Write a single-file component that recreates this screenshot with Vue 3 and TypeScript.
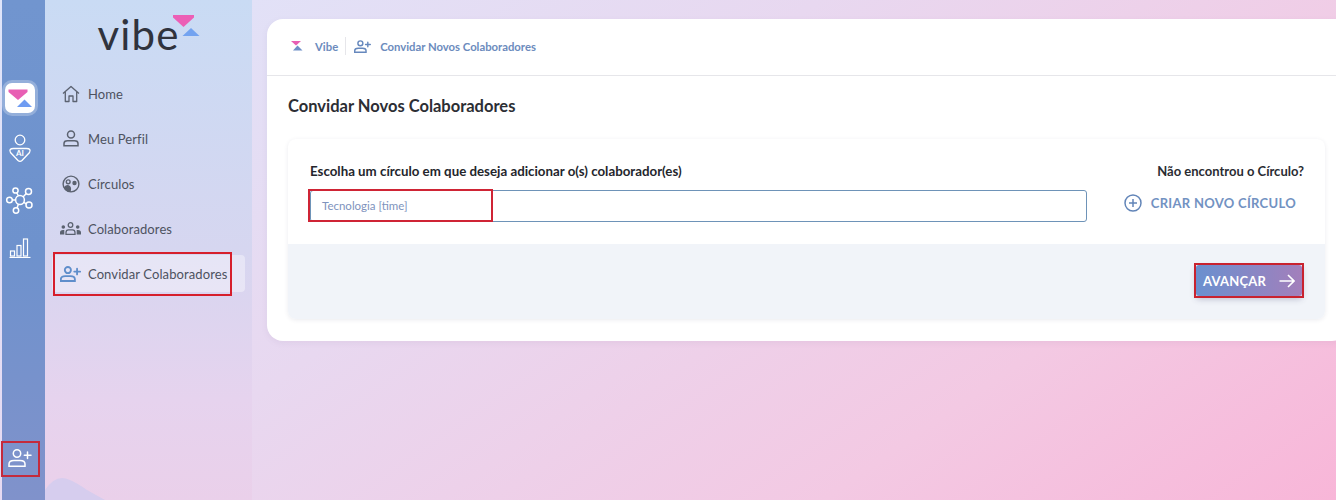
<script setup lang="ts">
const navItems = [
  { label: 'Home', icon: 'home' },
  { label: 'Meu Perfil', icon: 'user' },
  { label: 'Círculos', icon: 'face' },
  { label: 'Colaboradores', icon: 'group' },
  { label: 'Convidar Colaboradores', icon: 'invite' },
]
</script>

<template>
  <div class="page">
    <aside class="rail">
      <div class="tile">
        <svg width="30" height="30" viewBox="0 0 30 30"><path d="M3.500 6.500H22.500V9L13 17 3.500 9Z" fill="#e85fb4" /><path d="M19.500 16.500 27 24H12Z" fill="#6f9cf2" /></svg>
      </div>
      <svg class="rail-icon ai" width="24" height="30" viewBox="0 0 24 30" fill="none" stroke="#fff" stroke-width="1.300">
        <circle cx="12" cy="6" r="4.800" />
        <path d="M5.500 14.500H18.500Q23.500 14.500 21.500 18.500L14 26.500Q12 28.300 10 26.500L2.500 18.500Q.5 14.500 5.500 14.500Z" />
        <text x="12" y="21.500" text-anchor="middle" class="ai-text">AI</text>
      </svg>
      <svg class="rail-icon net" width="28" height="28" viewBox="0 0 28 28" fill="none" stroke="#fff" stroke-width="1.500">
        <circle cx="14" cy="14" r="4.400" />
        <circle cx="9.500" cy="4.500" r="2.600" />
        <circle cx="22.500" cy="5.500" r="3" />
        <circle cx="3.500" cy="14" r="2.800" />
        <circle cx="23" cy="19" r="3" />
        <circle cx="10" cy="24.500" r="2.700" />
        <path d="M10.800 7 12.500 10M20.300 7.600 17 11M6.300 14H9.600M20.300 17.800 17.800 16.300M11 21.900 12.400 18.200" />
      </svg>
      <svg class="rail-icon bars" width="22" height="20" viewBox="0 0 22 20" fill="none" stroke="#fff" stroke-width="1.200">
        <path d="M.5 19.500H21.500" />
        <rect x="1.500" y="13" width="4" height="5" />
        <rect x="8" y="7.500" width="4" height="10.500" />
        <rect x="14.500" y="1" width="4" height="17" />
      </svg>
      <svg class="rail-bottom" width="24" height="18" viewBox="0 0 24 18" fill="none" stroke="#fff" stroke-width="1.500" stroke-linecap="round">
        <circle cx="9" cy="4.500" r="3.700" />
        <path d="M1 17.200V15Q1 11.500 6 11.500H12Q17 11.500 17 15V17.200Z" />
        <path d="M19.500 3V9.500M16.300 6.200H23" />
      </svg>
    </aside>

    <nav class="side">
      <svg class="blob" width="60" height="24" viewBox="0 0 60 24"><path d="M0 14Q8 2 17 2 25 2 42 14L60 24H0Z" fill="#d6cdee" /></svg>
      <div class="brand">
        <span class="brand-word">vibe</span>
        <svg class="brand-mark" width="27" height="22" viewBox="0 0 27 22"><path d="M0 0H21V2.500L10.500 12 0 2.500Z" fill="#ec5fb6" /><path d="M18 13 26.500 21H9.500Z" fill="#73a3f0" /></svg>
      </div>
      <ul class="nav-list">
        <li v-for="item in navItems" :key="item.label" class="nav-item" :class="{ active: item.icon === 'invite' }">
          <span class="nav-icon">
            <svg v-if="item.icon === 'home'" width="18" height="18" viewBox="0 0 18 18" fill="none" stroke="#5b6270" stroke-width="1.300" stroke-linejoin="round"><path d="M1 8.600 9 1.400l8 7.200M3.300 7v9.500H7v-5.500h4v5.500h3.700V7" /></svg>
            <svg v-else-if="item.icon === 'user'" width="16" height="17" viewBox="0 0 16 17" fill="none" stroke="#5b6270" stroke-width="1.500"><circle cx="8" cy="4.500" r="3.500" /><path d="M1 15.800V13.500Q1 10.800 4.500 10.800H11.500Q15 10.800 15 13.500V15.800Z" /></svg>
            <svg v-else-if="item.icon === 'face'" width="18" height="18" viewBox="0 0 18 18" fill="none" stroke="#5b6270" stroke-width="1.400"><circle cx="9" cy="9" r="7.900" /><circle cx="6.200" cy="6.800" r="1.900" /><circle cx="12.500" cy="8" r="1.500" fill="#5b6270" /><path d="M2.500 12.500Q5 9.800 7.500 11.500 9 12.800 8 16.300 4 16 2.500 12.500Z" fill="#5b6270" /></svg>
            <svg v-else-if="item.icon === 'group'" width="21" height="13" viewBox="0 0 21 13" fill="#5b6270"><circle cx="10.500" cy="3" r="2.300" fill="none" stroke="#5b6270" stroke-width="1.300" /><path d="M6 12.300V10.500Q6 7.800 8.500 7.800H12.500Q15 7.800 15 10.500V12.300Z" fill="none" stroke="#5b6270" stroke-width="1.300" /><circle cx="3.300" cy="5" r="1.800" /><circle cx="17.700" cy="5" r="1.800" /><path d="M0 12.500V10.500Q0 8 3 8H4.300V12.500ZM21 12.500V10.500Q21 8 18 8H16.700V12.500Z" /></svg>
            <svg v-else width="21" height="16" viewBox="0 0 24 18" fill="none" stroke="#5f8ecb" stroke-width="2.100" stroke-linecap="round"><circle cx="9" cy="4.500" r="3.500" /><path d="M1 17V15Q1 11.500 6 11.500H12Q17 11.500 17 15V17Z" /><path d="M19.500 3V9.500M16.300 6.200H23" /></svg>
          </span>
          <span class="nav-label">{{ item.label }}</span>
        </li>
      </ul>
    </nav>

    <main class="main">
      <section class="panel">
        <header class="crumbs">
          <svg width="12" height="10" viewBox="0 0 12 10"><path d="M0 0H10L5 4.500Z" fill="#e85fb4" /><path d="M6.500 4.500 11.500 9.500H2Z" fill="#6f8fc8" /></svg>
          <span class="crumb vibe">Vibe</span>
          <span class="crumb-sep"></span>
          <svg width="17" height="13" viewBox="0 0 24 18" fill="none" stroke="#6688bd" stroke-width="2" stroke-linecap="round"><circle cx="9" cy="4.500" r="3.500" /><path d="M1 17V15Q1 11.500 6 11.500H12Q17 11.500 17 15V17Z" /><path d="M19.500 3V9.500M16.300 6.200H23" /></svg>
          <span class="crumb current">Convidar Novos Colaboradores</span>
        </header>
        <div class="panel-body">
          <h1 class="title">Convidar Novos Colaboradores</h1>
          <div class="form-card">
            <div class="form-top">
              <div class="field">
                <label class="field-label">Escolha um círculo em que deseja adicionar o(s) colaborador(es)</label>
                <div class="input">Tecnologia [time]</div>
              </div>
              <div class="create">
                <span class="create-q">Não encontrou o Círculo?</span>
                <span class="create-btn">
                  <svg width="18" height="18" viewBox="0 0 18 18" fill="none" stroke="#6285b8" stroke-width="1.500"><circle cx="9" cy="9" r="8" /><path d="M9 5V13M5 9H13" /></svg>
                  CRIAR NOVO CÍRCULO
                </span>
              </div>
            </div>
            <div class="form-foot">
              <button class="next" type="button">
                AVANÇAR
                <svg width="16" height="14" viewBox="0 0 16 14" fill="none" stroke="#fff" stroke-width="1.600"><path d="M.5 7H15M9 1l6 6-6 6" /></svg>
              </button>
            </div>
          </div>
        </div>
      </section>
    </main>

    <i class="mark m-rail"></i>
    <i class="mark m-nav"></i>
    <i class="mark m-input"></i>
    <i class="mark m-next"></i>
  </div>
</template>

<style>
html, body { margin: 0; }
</style>

<style scoped>
.page {
  position: relative;
  display: flex;
  width: 1336px;
  height: 500px;
  overflow: hidden;
  font-family: Lato, "Open Sans", sans-serif;
  background: linear-gradient(145deg, #dfe5fa 0%, #e8d8f0 40%, #f3c9e3 75%, #f8b6d8 100%);
  color: #2c2f36;
}
.rail {
  box-sizing: border-box;
  width: 43px;
  margin-left: 2px;
  flex: none;
  display: flex;
  flex-direction: column;
  align-items: center;
  padding-top: 80px;
  background: linear-gradient(180deg, #7195cf 0%, #6e92cd 50%, #8092cb 100%);
}
.tile {
  box-sizing: border-box;
  width: 30px;
  height: 30px;
  margin: 3px 0 0 -7px;
  background: #fff;
  border-radius: 7px;
  box-shadow: 0 0 0 3px rgba(255, 255, 255, .25);
  overflow: hidden;
}
.tile svg { display: block; }
.rail-icon { display: block; margin-left: -7px; }
.ai { margin-top: 21px; }
.ai-text { font: 700 8px Lato, sans-serif; fill: #fff; stroke: none; }
.net { margin-top: 22px; }
.bars { margin-top: 24px; }
.rail-bottom { margin-top: auto; margin-bottom: 33px; margin-left: -8px; }
.side {
  position: relative;
  box-sizing: border-box;
  width: 207px;
  flex: none;
  background: linear-gradient(180deg, #c9dbf4 0%, #d6d6f0 50%, #e6d3ee 80%, #ead0ea 100%);
}
.blob { position: absolute; left: 0; bottom: 0; }
.brand {
  display: flex;
  justify-content: center;
  height: 75px;
  position: relative;
}
.brand-word {
  font: 400 42px/1 Lato, sans-serif;
  letter-spacing: 1.200px;
  color: #30333d;
  position: relative;
  left: -10px;
  top: 13px;
  height: 42px;
}
.brand-mark { position: absolute; left: 128px; top: 15px; }
.nav-list {
  list-style: none;
  margin: 0;
  padding: 0 7px 0 7px;
}
.nav-item {
  display: flex;
  align-items: center;
  height: 37px;
  margin-bottom: 8px;
  padding-left: 1px;
  border-radius: 4px;
  color: #4d5260;
}
.nav-item.active { background: rgba(255, 255, 255, .38); }
.nav-icon { width: 35px; flex: none; display: flex; justify-content: center; }
.nav-label { font-size: 13px; letter-spacing: .1px; white-space: nowrap; }
.main { flex: 1; min-width: 0; padding: 19px 0 0 15px; }
.panel {
  background: #fff;
  border-radius: 16px 0 16px 16px;
  height: 322px;
  margin-right: -12px;
  box-shadow: 0 2px 6px rgba(120, 90, 140, .08);
}
.crumbs {
  box-sizing: border-box;
  height: 57px;
  display: flex;
  align-items: center;
  padding: 0 0 2px 24px;
  border-bottom: 1px solid #e6e6ea;
  color: #6c8bbd;
}
.crumb { font-size: 11.300px; font-weight: 700; }
.vibe { margin-left: 12px; }
.crumb-sep { width: 1px; height: 18px; background: #e6e6ea; margin: 0 8px 0 7px; }
.current { margin-left: 9px; }
.panel-body { padding: 0 22px 0 21px; }
.title { margin: 19px 0 22px; font-size: 16.500px; font-weight: 700; line-height: 22px; color: #2c2e34; }
.form-card {
  width: 1037px;
  border-radius: 8px;
  overflow: hidden;
  box-shadow: 0 1px 4px rgba(60, 60, 100, .10);
}
.form-top {
  box-sizing: border-box;
  height: 105px;
  display: flex;
  padding: 24px 21px 0 22px;
}
.field { width: 777px; flex: none; }
.field-label { display: block; font-size: 13.300px; font-weight: 700; line-height: 17px; color: #24262c; }
.input {
  box-sizing: border-box;
  height: 32px;
  margin-top: 10px;
  border: 1px solid #6e93b8;
  border-radius: 3px;
  padding-left: 11px;
  font-size: 11.500px;
  line-height: 29px;
  color: #7e93bd;
}
.create { flex: 1; display: flex; flex-direction: column; align-items: flex-end; }
.create-q { font-size: 13px; font-weight: 700; line-height: 17px; color: #2a2c32; }
.create-btn {
  display: flex;
  align-items: center;
  gap: 9px;
  margin: 10px 8px 0 0;
  font-size: 13px;
  font-weight: 700;
  line-height: 26px;
  letter-spacing: .3px;
  color: #7292c2;
  white-space: nowrap;
}
.form-foot {
  box-sizing: border-box;
  height: 75px;
  background: #f1f4f9;
  display: flex;
  justify-content: flex-end;
  padding: 21px 23px 0 0;
}
.next {
  box-sizing: border-box;
  width: 106px;
  height: 31px;
  border: 0;
  border-radius: 3px;
  padding: 0 7px;
  display: flex;
  align-items: center;
  justify-content: space-between;
  font-family: inherit;
  font-size: 13px;
  font-weight: 700;
  letter-spacing: .2px;
  color: #fff;
  background: linear-gradient(90deg, #6a90cf, #a37fbb);
  box-shadow: 0 3px 6px rgba(60, 60, 110, .3);
}
.mark {
  position: absolute;
  box-sizing: border-box;
  border: 2px solid #d61f2c;
  pointer-events: none;
}
.m-rail { left: 1px; top: 441px; width: 39px; height: 36px; border-color: #c42a3c; }
.m-nav { left: 53px; top: 252px; width: 179px; height: 44px; }
.m-input { left: 308px; top: 189px; width: 185px; height: 33px; border-color: #cf2435; }
.m-next { left: 1194px; top: 263px; width: 110px; height: 35px; border-color: #c9222f; }
</style>
